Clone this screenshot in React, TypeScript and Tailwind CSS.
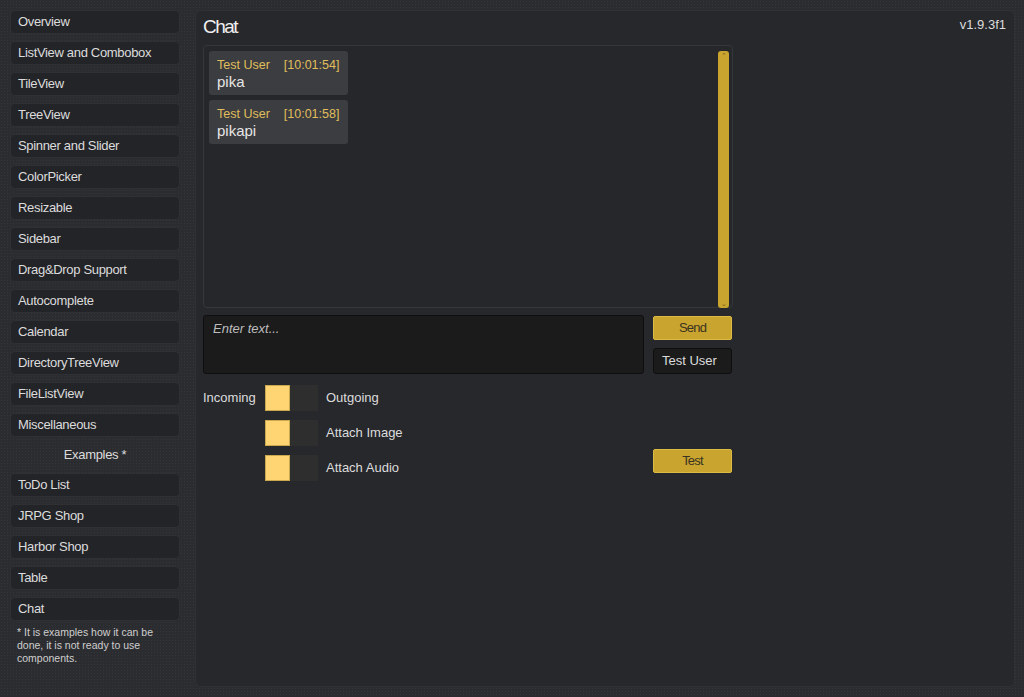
import React from "react";

const items = [
  "Overview",
  "ListView and Combobox",
  "TileView",
  "TreeView",
  "Spinner and Slider",
  "ColorPicker",
  "Resizable",
  "Sidebar",
  "Drag&Drop Support",
  "Autocomplete",
  "Calendar",
  "DirectoryTreeView",
  "FileListView",
  "Miscellaneous",
];

const examples = ["ToDo List", "JRPG Shop", "Harbor Shop", "Table", "Chat"];

function NavButton({ label }: { label: string }) {
  return (
    <div className="h-[24px] w-[170px] rounded-[5px] bg-[#232428] border border-[#2f3034] flex items-center pl-[7px] text-[13px] tracking-[-0.025em] text-[#dcdcdc]">
      {label}
    </div>
  );
}

function Toggle() {
  return (
    <div className="w-[53px] h-[26px] flex bg-[#2e2e2e]">
      <div className="w-[25px] h-[26px] bg-[#ffd573] border border-[#c9a850]" />
    </div>
  );
}

function Bubble({ time, text }: { time: string; text: string }) {
  return (
    <div className="w-[139px] h-[44px] rounded-[3px] bg-[#3c3d40] pl-[8px] pt-[6px]">
      <div className="flex text-[12.5px] leading-[16px] text-[#e0be5c]">
        <span>Test User</span>
        <span className="ml-[14px]">{time}</span>
      </div>
      <div className="text-[15px] leading-[18px] text-[#e6e6e6]">{text}</div>
    </div>
  );
}

export default function App() {
  return (
    <div
      className="w-[1024px] h-[697px] bg-[#2b2c30] bg-[image:radial-gradient(#34353a_1px,transparent_1px)] bg-[size:3px_3px] flex gap-[14px] pl-[10px] pt-[10px] overflow-hidden text-[#dcdcdc]"
      style={{ fontFamily: '"Liberation Sans", Arial, sans-serif' }}
    >
      <div className="w-[171px] flex flex-col">
        <div className="flex flex-col gap-[7px]">
          {items.map((i) => (
            <NavButton key={i} label={i} />
          ))}
        </div>
        <div className="h-[36px] w-[170px] flex items-center justify-center text-[13px] tracking-[-0.025em] text-[#dcdcdc]">
          Examples *
        </div>
        <div className="flex flex-col gap-[7px]">
          {examples.map((i) => (
            <NavButton key={i} label={i} />
          ))}
        </div>
        <div className="mt-[5px] pl-[7px] pr-[4px] text-[10.5px] leading-[13px] text-[#cfcfcf]">
          * It is examples how it can be done, it is not ready to use components.
        </div>
      </div>

      <div className="w-[820px] h-[677px] rounded-[6px] bg-[#27282c] border border-[#303136] pl-[7px] pt-[5px] pr-[8px] flex flex-col">
        <div className="flex justify-between items-start h-[29px]">
          <div className="text-[19px] leading-[22px] tracking-[-0.08em] text-[#f0f0f0]">Chat</div>
          <div className="text-[13px] leading-[16px] mt-[1px] text-[#dcdcdc]">v1.9.3f1</div>
        </div>

        <div className="w-[530px] flex flex-col">
          <div className="h-[263px] rounded-[4px] border border-[#36373b] bg-[#26272b] flex justify-between pl-[5px] pt-[5px] pr-[3px] pb-[2px]">
            <div className="flex flex-col gap-[5px]">
              <Bubble time="[10:01:54]" text="pika" />
              <Bubble time="[10:01:58]" text="pikapi" />
            </div>
            <div className="w-[11px] h-[257px] rounded-[3px] bg-[#c9a52f] flex flex-col justify-between items-center py-[1px]">
              <span className="text-[7px] leading-[7px] text-[#7a5a20]">⌃</span>
              <span className="text-[7px] leading-[7px] text-[#7a5a20]">⌄</span>
            </div>
          </div>

          <div className="flex gap-[9px] mt-[7px]">
            <div className="w-[441px] h-[59px] rounded-[3px] bg-[#1b1b1c] border border-[#0e0e0e] px-[9px] pt-[3px] text-[13px] italic text-[#bdbdbd]">
              Enter text...
            </div>
            <div className="flex flex-col gap-[8px] pt-[1px]">
              <div className="w-[79px] h-[24px] rounded-[2px] bg-[#c9a52f] border border-[#dcbb45] flex items-center justify-center text-[13px] tracking-[-0.06em] text-[#3b3322]">
                Send
              </div>
              <div className="w-[79px] h-[26px] rounded-[3px] bg-[#1b1b1c] border border-[#0e0e0e] flex items-center pl-[8px] text-[13px] text-[#dcdcdc]">
                Test User
              </div>
            </div>
          </div>

          <div className="flex justify-between mt-[11px]">
            <div className="flex flex-col gap-[9px]">
              <div className="flex items-center">
                <div className="w-[62px] text-[13px]">Incoming</div>
                <Toggle />
                <div className="ml-[8px] text-[13px]">Outgoing</div>
              </div>
              <div className="flex items-center">
                <div className="w-[62px]" />
                <Toggle />
                <div className="ml-[8px] text-[13px]">Attach Image</div>
              </div>
              <div className="flex items-center">
                <div className="w-[62px]" />
                <Toggle />
                <div className="ml-[8px] text-[13px]">Attach Audio</div>
              </div>
            </div>
            <div className="self-end mb-[8px] mr-[1px] w-[79px] h-[24px] rounded-[2px] bg-[#c9a52f] border border-[#dcbb45] flex items-center justify-center text-[13px] tracking-[-0.06em] text-[#3b3322]">
              Test
            </div>
          </div>
        </div>
      </div>
    </div>
  );
}
